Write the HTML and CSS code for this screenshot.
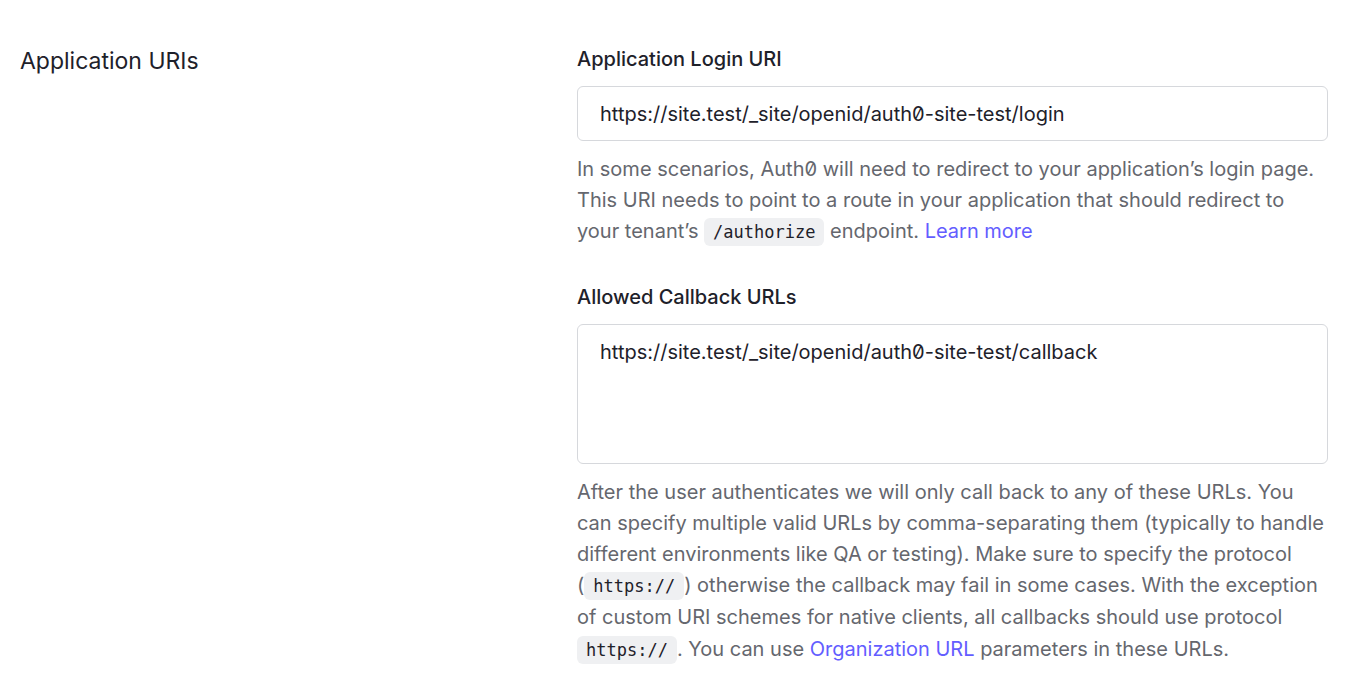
FILE: index.html
```html
<!DOCTYPE html>
<html lang="en">
<head>
<meta charset="utf-8">
<title>Application URIs</title>
<link rel="stylesheet" href="styles.css">
</head>
<body>
<section class="settings-row">
  <div class="row-title">
    <h2>Application URIs</h2>
  </div>
  <div class="row-fields">
    <div class="field">
      <label class="field-label" for="login-uri">Application Login URI</label>
      <input id="login-uri" class="text-input" type="text" value="https://site.test/_site/openid/auth0-site-test/login">
      <p class="help">In some scenarios, Auth0 will need to redirect to your application’s login page. This URI needs to point to a route in your application that should redirect to your tenant’s <code>/authorize</code> endpoint. <a href="#">Learn more</a></p>
    </div>
    <div class="field">
      <label class="field-label" for="callbacks">Allowed Callback URLs</label>
      <textarea id="callbacks" class="text-area">https://site.test/_site/openid/auth0-site-test/callback</textarea>
      <p class="help">After the user authenticates we will only call back to any of these URLs. You can specify multiple valid URLs by comma-separating them (typically to handle different environments like QA or testing). Make sure to specify the protocol (<code>https://</code>) otherwise the callback may fail in some cases. With the exception of custom URI schemes for native clients, all callbacks should use protocol <code>https://</code>. You can use <a href="#">Organization URL</a> parameters in these URLs.</p>
    </div>
  </div>
</section>
</body>
</html>
```
FILE: styles.css
```css
* { box-sizing: border-box; }
html, body { margin: 0; padding: 0; background: #ffffff; }
body {
  font-family: Inter, "Noto Sans", sans-serif;
  font-feature-settings: "zero" 1;
  color: #1e212a;
}
.settings-row {
  display: flex;
  padding: 45px 24px 0 20px;
}
.row-title { width: 557px; flex: none; }
.row-title h2 {
  margin: 0;
  font-size: 23px;
  font-weight: 400;
  line-height: 33px;
}
.row-fields { flex: 1; max-width: 751px; }
.field { margin-bottom: 34px; }
.field-label {
  display: block;
  font-size: 20px;
  font-weight: 500;
  line-height: 28px;
  margin-bottom: 13px;
}
.text-input, .text-area {
  display: block;
  width: 100%;
  font-family: inherit;
  font-feature-settings: "zero" 1;
  font-size: 20px;
  color: #1e212a;
  border: 1px solid #d6d8dc;
  border-radius: 6px;
  background: #fff;
  padding: 0 22px;
  outline: none;
}
.text-input { height: 55px; }
.text-area {
  height: 140px;
  padding-top: 13px;
  line-height: 28px;
  resize: none;
}
.help {
  margin: 13px 0 0;
  font-size: 20px;
  line-height: 31.2px;
  color: #65676e;
}
.help code {
  font-family: "DejaVu Sans Mono", monospace;
  font-size: 17px;
  color: #1e212a;
  background: #eff0f2;
  border-radius: 6px;
  padding: 4px 9px;
}
.help a { color: #635dff; text-decoration: none; }
```
